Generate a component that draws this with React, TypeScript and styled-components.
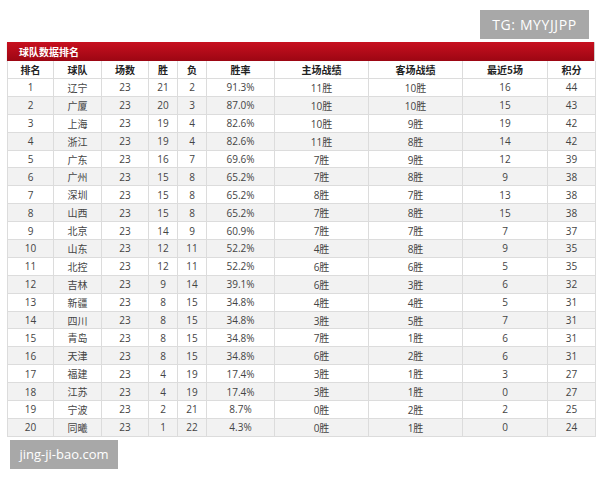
import React from "react";
import styled, { createGlobalStyle } from "styled-components";

const GlobalStyle = createGlobalStyle`
  html, body {
    margin: 0;
    padding: 0;
    background: #fff;
  }
  body {
    font-family: "Open Sans", "Noto Sans CJK SC", sans-serif;
  }
`;

const Page = styled.div`
  position: relative;
  width: 600px;
  height: 480px;
  overflow: hidden;
  padding: 42px 5px 0 7px;
  box-sizing: border-box;
`;

const Panel = styled.div`
  width: 588px;
  border-right: 1px solid #d8d8d8;
  box-sizing: border-box;
`;

const TitleBar = styled.div`
  height: 19px;
  background: linear-gradient(#c8101f, #9c0613);
  color: #fff;
  font-family: "Noto Sans CJK SC", sans-serif;
  font-weight: 700;
  font-size: 10px;
  line-height: 19px;
  padding-left: 12px;
  box-shadow: 0 1px 1px rgba(0, 0, 0, 0.25);
`;

const Table = styled.table`
  width: 100%;
  border-collapse: collapse;
  table-layout: fixed;
  font-size: 10px;
  color: #444;
`;

const HeadCell = styled.th`
  height: 17px;
  padding: 0;
  font-family: "Noto Sans CJK SC", sans-serif;
  font-weight: 700;
  color: #222;
  text-align: center;
  border: 1px solid #dcdcdc;
  border-top: none;
  background: #fff;
`;

const Row = styled.tr<{ $alt: boolean }>`
  background: ${(p) => (p.$alt ? "#f2f2f2" : "#fff")};
`;

const Cell = styled.td`
  height: 16.9px;
  padding: 0;
  text-align: center;
  border: 1px solid #dcdcdc;
  font-family: "Open Sans", "Noto Sans CJK SC", sans-serif;
  color: #444;
`;

const Watermark = styled.div<{ $top: number; $left: number; $w: number; $size: number; $spacing: number }>`
  position: absolute;
  top: ${(p) => p.$top}px;
  left: ${(p) => p.$left}px;
  width: ${(p) => p.$w}px;
  height: 29px;
  background: #a8a8a8;
  color: #fff;
  font-family: "Open Sans", sans-serif;
  font-size: ${(p) => p.$size}px;
  letter-spacing: ${(p) => p.$spacing}px;
  line-height: 29px;
  text-align: center;
`;

const cols = [46, 48, 47, 29, 29, 68, 94, 94, 85, 48];
const heads = ["排名", "球队", "场数", "胜", "负", "胜率", "主场战绩", "客场战绩", "最近5场", "积分"];

const rows: (string | number)[][] = [
  [1, "辽宁", 23, 21, 2, "91.3%", "11胜", "10胜", 16, 44],
  [2, "广厦", 23, 20, 3, "87.0%", "10胜", "10胜", 15, 43],
  [3, "上海", 23, 19, 4, "82.6%", "10胜", "9胜", 19, 42],
  [4, "浙江", 23, 19, 4, "82.6%", "11胜", "8胜", 14, 42],
  [5, "广东", 23, 16, 7, "69.6%", "7胜", "9胜", 12, 39],
  [6, "广州", 23, 15, 8, "65.2%", "7胜", "8胜", 9, 38],
  [7, "深圳", 23, 15, 8, "65.2%", "8胜", "7胜", 13, 38],
  [8, "山西", 23, 15, 8, "65.2%", "7胜", "8胜", 15, 38],
  [9, "北京", 23, 14, 9, "60.9%", "7胜", "7胜", 7, 37],
  [10, "山东", 23, 12, 11, "52.2%", "4胜", "8胜", 9, 35],
  [11, "北控", 23, 12, 11, "52.2%", "6胜", "6胜", 5, 35],
  [12, "吉林", 23, 9, 14, "39.1%", "6胜", "3胜", 6, 32],
  [13, "新疆", 23, 8, 15, "34.8%", "4胜", "4胜", 5, 31],
  [14, "四川", 23, 8, 15, "34.8%", "3胜", "5胜", 7, 31],
  [15, "青岛", 23, 8, 15, "34.8%", "7胜", "1胜", 6, 31],
  [16, "天津", 23, 8, 15, "34.8%", "6胜", "2胜", 6, 31],
  [17, "福建", 23, 4, 19, "17.4%", "3胜", "1胜", 3, 27],
  [18, "江苏", 23, 4, 19, "17.4%", "3胜", "1胜", 0, 27],
  [19, "宁波", 23, 2, 21, "8.7%", "0胜", "2胜", 2, 25],
  [20, "同曦", 23, 1, 22, "4.3%", "0胜", "1胜", 0, 24],
];

export default function App() {
  return (
    <>
      <GlobalStyle />
      <Page>
        <Panel>
          <TitleBar>球队数据排名</TitleBar>
          <Table>
            <colgroup>
              {cols.map((w, i) => (
                <col key={i} style={{ width: w }} />
              ))}
            </colgroup>
            <thead>
              <tr>
                {heads.map((h) => (
                  <HeadCell key={h}>{h}</HeadCell>
                ))}
              </tr>
            </thead>
            <tbody>
              {rows.map((r, i) => (
                <Row key={i} $alt={i % 2 === 1}>
                  {r.map((v, j) => (
                    <Cell key={j}>{v}</Cell>
                  ))}
                </Row>
              ))}
            </tbody>
          </Table>
        </Panel>
        <Watermark $top={10} $left={480} $w={109} $size={14} $spacing={0.6}>
          TG: MYYJJPP
        </Watermark>
        <Watermark $top={440} $left={10} $w={108} $size={13} $spacing={0}>
          jing-ji-bao.com
        </Watermark>
      </Page>
    </>
  );
}
